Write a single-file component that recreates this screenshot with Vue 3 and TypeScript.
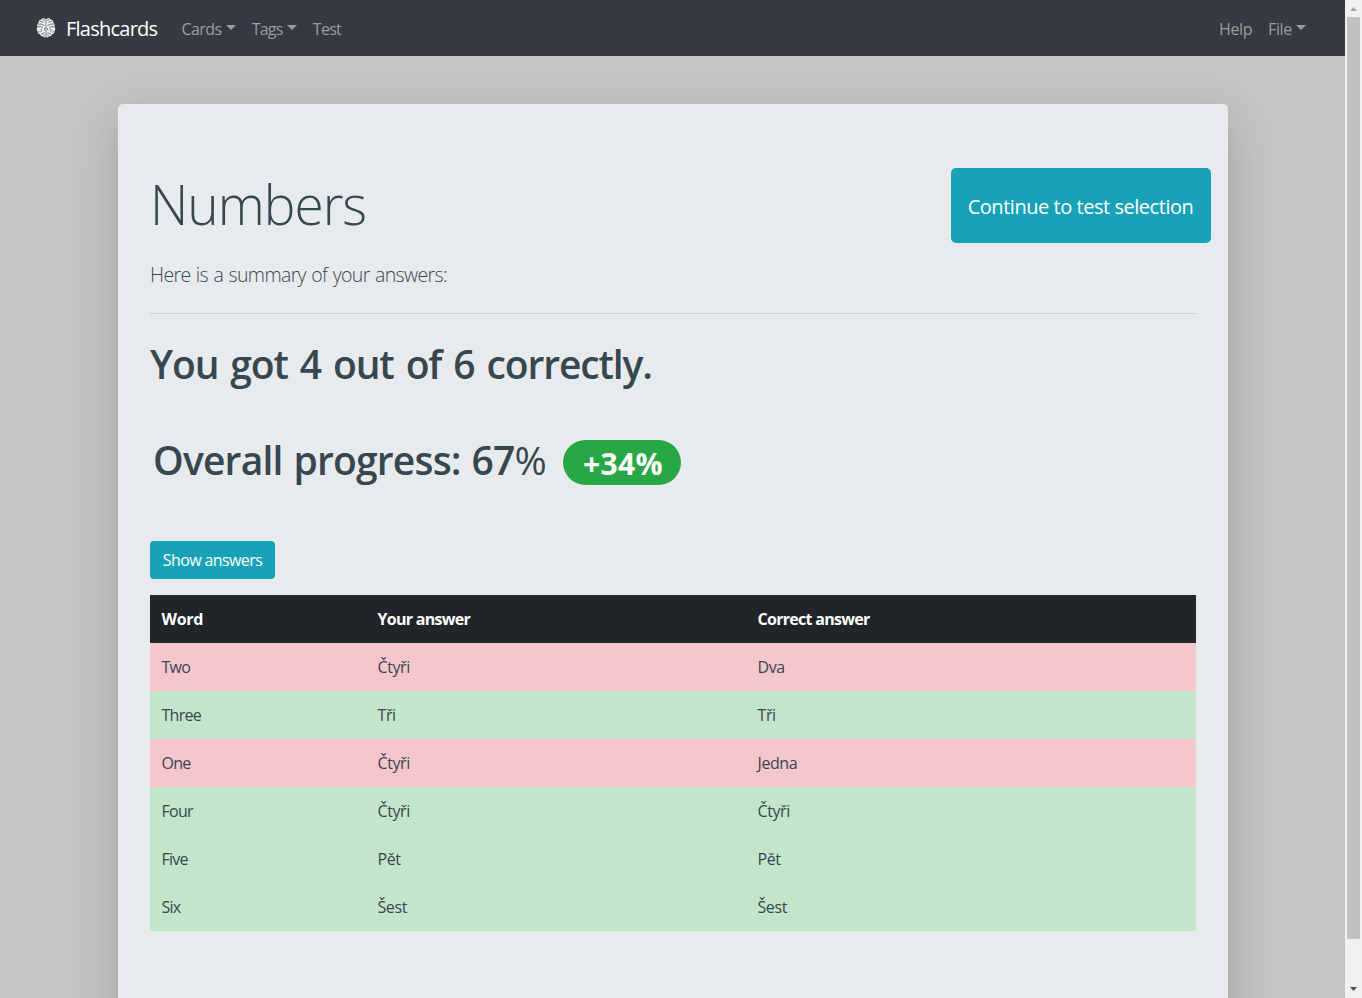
<script setup lang="ts">
interface Answer {
  word: string
  given: string
  correct: string
}

const answers: Answer[] = [
  { word: 'Two', given: 'Čtyři', correct: 'Dva' },
  { word: 'Three', given: 'Tři', correct: 'Tři' },
  { word: 'One', given: 'Čtyři', correct: 'Jedna' },
  { word: 'Four', given: 'Čtyři', correct: 'Čtyři' },
  { word: 'Five', given: 'Pět', correct: 'Pět' },
  { word: 'Six', given: 'Šest', correct: 'Šest' },
]
</script>

<template>
  <div class="window">
    <div class="viewport">
      <nav class="navbar">
        <a class="brand">
          <svg class="logo" viewBox="0 0 20 20">
            <path class="lobe" d="M9.700 1C8 0 6 .2 5.200 1.500 3.500 1.800 2.700 3.200 2.700 4.500 1.400 5.500 1 7.300 1.500 8.700.5 10 .6 12 1.500 13 1.400 14.800 2.600 16 3.900 16.300 4.600 18 6.200 18.700 7.300 18.400 8.200 19.600 9.200 19.600 9.700 19ZM10.300 1C12 0 14 .2 14.800 1.500 16.500 1.800 17.300 3.200 17.300 4.500 18.600 5.500 19 7.300 18.500 8.700 19.500 10 19.400 12 18.500 13 18.600 14.800 17.400 16 16.100 16.300 15.400 18 13.800 18.700 12.700 18.400 11.800 19.600 10.800 19.600 10.300 19Z" />
            <path class="fold" d="M4.200 3.300 7.600 4.200M6.600 1.500 8.800 2.700M2 6.300 5 5.900 8.500 7.600M1.600 9 4.800 8.500 7 10M8.800 10 8 12.300M5.400 10.800 5 13.800M2.500 12.800 3.600 14.600M4.800 16.300 8.600 14.800M7.300 17.800 8.800 16.800M15.800 3.300 12.400 4.200M13.400 1.500 11.200 2.700M18 6.300 15 5.900 11.500 7.600M18.400 9 15.200 8.500 13 10M11.200 10 12 12.300M14.600 10.800 15 13.800M17.500 12.800 16.400 14.600M15.200 16.300 11.400 14.800M12.700 17.800 11.200 16.800" />
          </svg>
          <span>Flashcards</span>
        </a>
        <div class="links">
          <a class="link cards">Cards<i class="caret"></i></a>
          <a class="link">Tags<i class="caret"></i></a>
          <a class="link">Test</a>
        </div>
        <div class="links end">
          <a class="link">Help</a>
          <a class="link">File<i class="caret"></i></a>
        </div>
      </nav>

      <main class="card">
        <header class="top">
          <div>
            <h1 class="title">Numbers</h1>
            <p class="lead">Here is a summary of your answers:</p>
          </div>
          <button class="btn large">Continue to test selection</button>
        </header>
        <hr />
        <h2 class="result">You got 4 out of 6 correctly.</h2>
        <div class="progress">
          <h2 class="overall">Overall progress: 67<span class="pct">%</span></h2>
          <span class="badge">+34%</span>
        </div>
        <button class="btn show">Show answers</button>
        <table>
          <thead>
            <tr><th class="word">Word</th><th class="given">Your answer</th><th>Correct answer</th></tr>
          </thead>
          <tbody>
            <tr v-for="a in answers" :key="a.word" :class="a.given === a.correct ? 'right' : 'wrong'">
              <td class="word">{{ a.word }}</td><td>{{ a.given }}</td><td>{{ a.correct }}</td>
            </tr>
          </tbody>
        </table>
      </main>
    </div>
    <div class="scrollbar">
      <svg class="arrow" viewBox="0 0 17 17"><path fill="#a3a3a3" d="M5 11h7L8.500 7z" /></svg>
      <div class="thumb"></div>
      <svg class="arrow" viewBox="0 0 17 17"><path fill="#505050" d="M5 6h7L8.500 10z" /></svg>
    </div>
  </div>
</template>

<style>
html, body { margin: 0; overflow: hidden; }
</style>

<style scoped>
* { box-sizing: border-box; }
.window { display: flex; width: 1362px; height: 998px; overflow: hidden; font: 400 16px/24px "Open Sans", "Noto Sans", sans-serif; color: #37474f; }
.viewport { width: 1345px; height: 998px; overflow: hidden; background: #c4c4c4; }
.navbar { display: flex; align-items: center; height: 56px; padding: 0 31px 0 36px; background: #343a40; color: #9a9da0; }
.brand { display: flex; align-items: center; width: 137.500px; color: #fff; font-size: 20px; line-height: 30px; letter-spacing: -.76px; }
.brand span { padding-top: 1px; }
.logo { width: 20px; height: 20px; margin-right: 10px; }
.lobe { fill: #f0f0f0; }
.fold { fill: none; stroke: #55575a; stroke-width: .8; }
.links { display: flex; letter-spacing: -.75px; }
.cards { letter-spacing: -.6px; }
.end { margin-left: auto; letter-spacing: -.4px; }
.link { display: flex; align-items: center; padding: 1px 8px 0; }
.caret { width: 0; height: 0; margin: -3px 0 0 4.200px; border: 5px solid transparent; border-top-color: currentColor; border-bottom: 0; }
.card { width: 1110px; height: 1000px; margin: 48px 0 0 118px; padding: 64px 32px; background: #e8ebee; border-radius: 5px; box-shadow: 0 16px 48px rgba(0, 0, 0, .175); }
.top { display: flex; justify-content: space-between; height: 145px; margin-right: -15px; }
h1, h2, p { margin: 0; }
.title { padding-top: 1px; font-size: 56px; line-height: 69px; font-weight: 300; letter-spacing: -1.050px; transform: scaleX(.95); transform-origin: left; }
.lead { margin-top: 22px; font-size: 19.500px; line-height: 30px; font-weight: 300; letter-spacing: -.65px; word-spacing: 1px; white-space: nowrap; }
.btn { display: block; height: 38px; padding: 0 12px; border: 0; border-radius: 4px; background: #17a2b8; color: #fff; font: inherit; letter-spacing: -.6px; white-space: nowrap; }
.show { width: 125px; }
.large { width: 260px; height: 75px; padding: 3px 1px 0 0; font-size: 20px; border-radius: 5px; letter-spacing: -.46px; }
hr { height: 1px; margin: 0; border: 0; background: #cdd1d5; }
.result { height: 48px; margin-top: 26px; font-size: 39px; line-height: 48px; font-weight: 600; letter-spacing: -1.120px; word-spacing: 3px; white-space: nowrap; }
.progress { display: flex; align-items: center; height: 48px; margin: 48px 0 57px; padding-left: 3px; }
.overall { width: 393.500px; font-size: 39px; line-height: 48px; font-weight: 600; letter-spacing: -.8px; word-spacing: 1.500px; white-space: nowrap; }
.pct { font-weight: 400; }
.badge { width: 118px; height: 45px; margin: 4px 0 0 16.500px; padding-left: 2px; border-radius: 23px; background: #28a745; color: #fff; font-size: 30px; line-height: 47px; font-weight: 700; letter-spacing: .4px; text-align: center; }
table { width: 1046px; margin-top: 16px; border-collapse: collapse; table-layout: fixed; text-align: left; }
tr { height: 48px; }
th, td { padding: 0 11.500px; letter-spacing: -.4px; }
th { background: #212529; color: #fff; font-weight: 700; letter-spacing: -.7px; }
.word { width: 216px; }
td.word { letter-spacing: -.75px; }
th.word { letter-spacing: -.3px; }
.given { width: 380px; }
.wrong { background: #f5c6cb; }
.right { background: #c3e6cb; }
.scrollbar { display: flex; flex-direction: column; width: 17px; height: 998px; background: #f1f1f1; }
.arrow { width: 17px; height: 17px; }
.thumb { width: 13px; height: 922px; margin: 0 2px 42px; background: #c1c1c1; }
</style>
